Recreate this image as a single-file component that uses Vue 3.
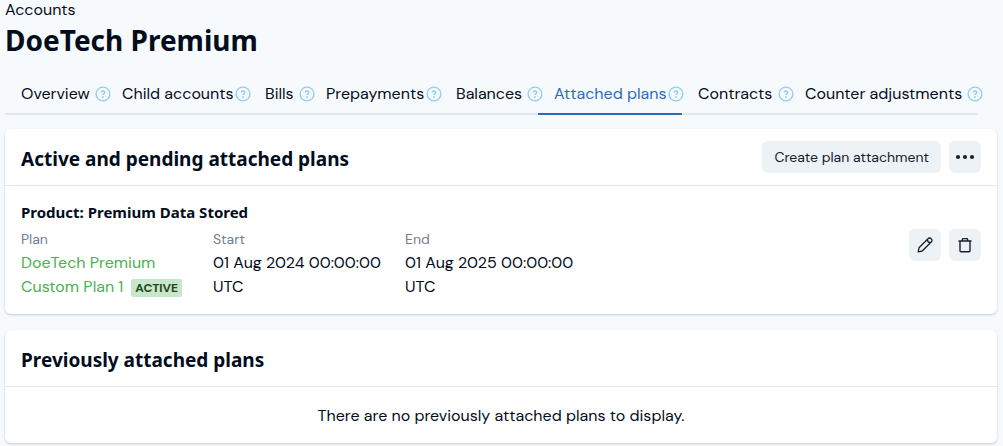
<template>
  <main class="page">
    <header class="page-header">
      <a class="breadcrumb" href="#accounts">Accounts</a>
      <h1 class="page-title">DoeTech Premium</h1>
    </header>

    <nav class="tabs" aria-label="Account sections">
      <div v-for="tab in tabs" :key="tab.label" class="tab" :class="{ active: tab.label === activeTab, spaced: tab.spaced }">
        <a class="tab-link" href="#" @click.prevent="activeTab = tab.label">{{ tab.label }}</a>
        <button class="help" type="button" :aria-label="'Help: ' + tab.label">
          <svg viewBox="0 0 16 16" width="16" height="16" fill="none">
            <circle cx="8" cy="8" r="6.9" stroke="currentColor" stroke-width="1.4" />
            <path d="M6.2 6.5C6.2 5.5 7 5 8 5s1.8.6 1.8 1.5c0 1.2-1.8 1.2-1.8 2.5" stroke="currentColor" stroke-width="1.4" />
            <circle cx="8" cy="10.9" r=".9" fill="currentColor" />
          </svg>
        </button>
      </div>
    </nav>

    <section class="card">
      <div class="card-header">
        <h2 class="card-title">Active and pending attached plans</h2>
        <div class="actions">
          <button class="btn" type="button">Create plan attachment</button>
          <button class="btn btn-icon" type="button" aria-label="More actions">
            <svg viewBox="0 0 20 20" width="20" height="20" fill="currentColor">
              <circle cx="3" cy="10" r="2.1" />
              <circle cx="10" cy="10" r="2.1" />
              <circle cx="17" cy="10" r="2.1" />
            </svg>
          </button>
        </div>
      </div>
      <div class="card-body plan-row">
        <div class="plan-info">
          <h3 class="product">Product: {{ plan.product }}</h3>
          <dl class="fields">
            <div class="field">
              <dt>Plan</dt>
              <dd>
                <a class="plan-link" href="#plan">{{ plan.name }}</a>
                <span class="badge">ACTIVE</span>
              </dd>
            </div>
            <div class="field">
              <dt>Start</dt>
              <dd>{{ plan.start }}</dd>
            </div>
            <div class="field">
              <dt>End</dt>
              <dd>{{ plan.end }}</dd>
            </div>
          </dl>
        </div>
        <div class="actions">
          <button class="btn btn-icon" type="button" aria-label="Edit">
            <svg viewBox="0 0 16 16" width="16" height="16" fill="none" stroke="currentColor" stroke-width="1.3" stroke-linejoin="round">
              <path d="M1.2 14.8l.8-4L11 1.8a2 2 0 0 1 3.2 0 2 2 0 0 1 0 3.2L5.2 14l-4 .8z" />
              <path d="M10.4 2.6c0 1.9 1.2 3 3 3" />
            </svg>
          </button>
          <button class="btn btn-icon" type="button" aria-label="Delete">
            <svg viewBox="0 0 16 16" width="16" height="16" fill="none" stroke="currentColor" stroke-width="1.4" stroke-linejoin="round">
              <path d="M1.5 4h13M5 4l.7-2.4h4.6L11 4M3 4v9.7c0 .7.4 1.1 1.1 1.1h7.8c.7 0 1.1-.4 1.1-1.1V4" />
            </svg>
          </button>
        </div>
      </div>
    </section>

    <section class="card">
      <div class="card-header">
        <h2 class="card-title">Previously attached plans</h2>
      </div>
      <p class="card-body empty">There are no previously attached plans to display.</p>
    </section>
  </main>
</template>

<script setup>
import { reactive, ref } from 'vue';

const tabs = [
  { label: 'Overview', spaced: true },
  { label: 'Child accounts' },
  { label: 'Bills', spaced: true },
  { label: 'Prepayments' },
  { label: 'Balances', spaced: true },
  { label: 'Attached plans' },
  { label: 'Contracts', spaced: true },
  { label: 'Counter adjustments', spaced: true }
]

const activeTab = ref('Attached plans')

const plan = reactive({
  product: 'Premium Data Stored',
  name: 'DoeTech Premium Custom Plan 1',
  start: '01 Aug 2024 00:00:00 UTC',
  end: '01 Aug 2025 00:00:00 UTC'
})
</script>

<style>
body {
  background: #f7fafd;
}
</style>

<style scoped>
.page {
  box-sizing: border-box;
  padding: 0 6px 3px 5px;
  background: #f7fafd;
  color: #020d1c;
  font-family: "DM Sans", Roboto, sans-serif;
  font-size: 16px;
  line-height: 24px;
}

h1,
h2,
h3,
p,
dl,
dd {
  margin: 0;
}

svg {
  display: block;
}

a {
  color: inherit;
  text-decoration: none;
}

.breadcrumb {
  display: block;
  line-height: 20px;
}

.page-title {
  font: 700 28px/40px "Noto Sans", sans-serif;
}

.tabs {
  display: grid;
  grid-template-columns: 101fr 143fr 61fr 130fr 98fr 144fr 107fr 189fr;
  margin: 13px 19px 14px 0;
}

.tab {
  display: flex;
  align-items: center;
  justify-content: space-between;
  height: 38px;
  padding: 2px 0 0 16px;
  border-bottom: 2px solid #e2e8f0;
  white-space: nowrap;
}

.tab.active {
  border-color: #2b6cb8;
  color: #2b6cb8;
}

.help {
  margin-right: -2px;
  padding: 0;
  border: 0;
  background: none;
  color: #90cdf4;
}

.tab.spaced .help {
  margin-right: -5px;
}

.card {
  border-radius: 6px;
  background: #fff;
  box-shadow: 0 1px 3px rgba(0, 0, 0, .1), 0 1px 2px rgba(0, 0, 0, .1);
}

.card + .card {
  margin-top: 16px;
}

.card-header {
  display: flex;
  align-items: center;
  justify-content: space-between;
  min-height: 32px;
  padding: 12px 16px;
  border-bottom: 1px solid #e2e8f0;
}

.card-title {
  padding-top: 4px;
  font: 700 19px/28px "Noto Sans", sans-serif;
}

.card-body {
  padding: 16px 16px 15px;
}

.actions {
  display: flex;
  gap: 8px;
}

.btn {
  height: 32px;
  padding: 0 12px;
  border: 0;
  border-radius: 6px;
  background: #edf2f7;
  color: #1a202c;
  font: 14px/20px "DM Sans", Roboto, sans-serif;
}

.btn-icon {
  display: flex;
  align-items: center;
  justify-content: center;
  width: 32px;
  padding: 0;
}

.plan-row {
  display: flex;
  align-items: center;
  justify-content: space-between;
}

.plan-row .actions {
  padding-bottom: 12px;
}

.product {
  margin-bottom: 6px;
  font: 700 15px/20px "Noto Sans", sans-serif;
}

.fields {
  display: flex;
  gap: 16px;
}

.field {
  width: 176px;
}

dt {
  color: #718096;
  font-size: 14px;
  line-height: 23px;
}

.plan-link {
  color: #4caf50;
}

.badge {
  display: inline-block;
  margin-left: 8px;
  padding: 0 4px;
  border-radius: 2px;
  background: #c8e6c9;
  color: #1e4620;
  font-size: 12px;
  font-weight: 700;
  line-height: 18px;
}

.empty {
  padding-top: 17px;
  text-align: center;
}
</style>
